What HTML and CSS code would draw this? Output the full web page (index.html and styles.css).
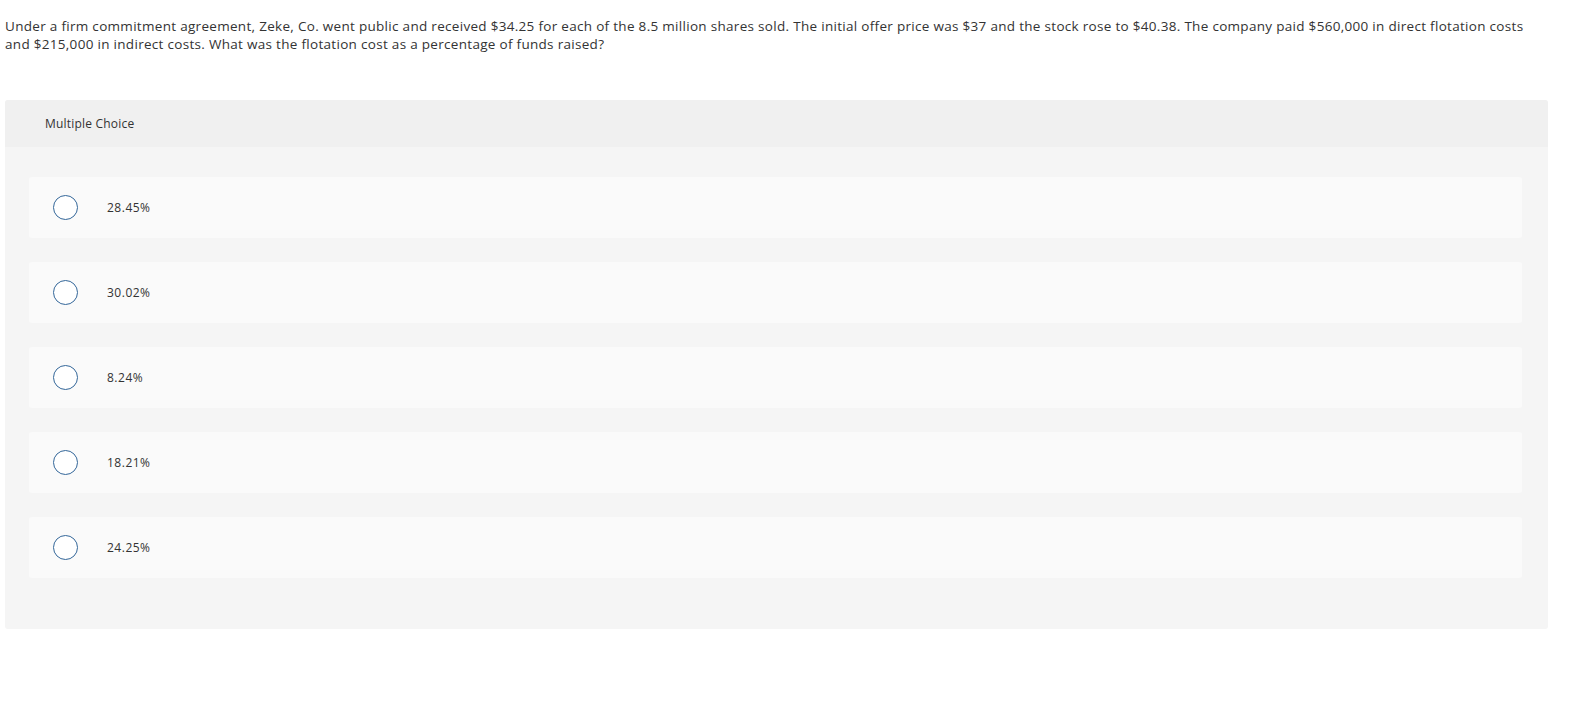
FILE: index.html
```html
<!DOCTYPE html>
<html>
<head>
<meta charset="utf-8">
<link rel="stylesheet" href="styles.css">
</head>
<body>
<p class="question">Under a firm commitment agreement, Zeke, Co. went public and received $34.25 for each of the 8.5 million shares sold. The initial offer price was $37 and the stock rose to $40.38. The company paid $560,000 in direct flotation costs and $215,000 in indirect costs. What was the flotation cost as a percentage of funds raised?</p>
<div class="mc">
  <div class="mc-header">Multiple Choice</div>
  <div class="mc-body">
    <div class="option"><span class="radio"></span><span class="label">28.45%</span></div>
    <div class="option"><span class="radio"></span><span class="label">30.02%</span></div>
    <div class="option"><span class="radio"></span><span class="label">8.24%</span></div>
    <div class="option"><span class="radio"></span><span class="label">18.21%</span></div>
    <div class="option"><span class="radio"></span><span class="label">24.25%</span></div>
  </div>
</div>
</body>
</html>
```
FILE: styles.css
```css
html, body { margin: 0; padding: 0; background: #fff; }
body {
  font-family: "Open Sans", Lato, sans-serif;
  color: #333;
  padding: 0 5px;
}
.question {
  margin: 0;
  padding-top: 17px;
  font-size: 13.5px;
  line-height: 18px;
  letter-spacing: 0.3px;
  width: 1535px;
}
.mc {
  margin-top: 47px;
  width: 1543px;
  border-radius: 3px;
  overflow: hidden;
  background: #f5f5f5;
}
.mc-header {
  background: #f0f0f0;
  height: 47px;
  display: flex;
  align-items: center;
  padding-left: 40px;
  font-size: 12px;
  letter-spacing: 0.2px;
  color: #333;
}
.mc-body {
  padding: 30px 26px 51px 24px;
  display: flex;
  flex-direction: column;
  gap: 24px;
}
.option {
  background: #fafafa;
  border-radius: 3px;
  height: 61px;
  display: flex;
  align-items: center;
  padding-left: 24px;
}
.radio {
  width: 23px;
  height: 23px;
  border: 1.5px solid #336699;
  border-radius: 50%;
  background: #fff;
  flex: none;
}
.label {
  margin-left: 29px;
  font-size: 12px;
  letter-spacing: 0.5px;
  color: #333;
}
```
